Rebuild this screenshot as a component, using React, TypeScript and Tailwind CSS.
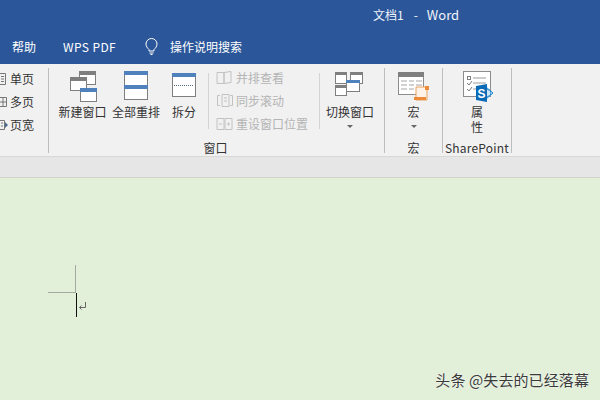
const cjk = "font-['Noto_Sans_CJK_SC','Liberation_Sans',sans-serif]";

function Win({ x, y, w, h, bar, head = 4, border = "#7f7f7f" }: { x: number; y: number; w: number; h: number; bar: string; head?: number; border?: string }) {
  return (
    <g>
      <rect x={x + 0.5} y={y + 0.5} width={w - 1} height={h - 1} fill="#fff" stroke={border} />
      <rect x={x} y={y} width={w} height={head} fill={bar} />
    </g>
  );
}

function NewWindow() {
  return (
    <svg width="32" height="32" viewBox="0 0 32 32">
      <Win x={12} y={0} w={17} h={14} bar="#7f7f7f" />
      <Win x={3} y={6} w={17} h={14} bar="#7f7f7f" />
      <Win x={13} y={17} w={17} h={14} bar="#4f81bd" />
    </svg>
  );
}
function Arrange() {
  return (
    <svg width="26" height="32" viewBox="0 0 26 32">
      <Win x={1} y={0} w={24} h={15} bar="#4f81bd" />
      <Win x={1} y={14} w={24} h={15} bar="#4f81bd" />
    </svg>
  );
}
function Split() {
  return (
    <svg width="26" height="26" viewBox="0 0 26 26">
      <Win x={1} y={1} w={24} h={24} bar="#4f81bd" />
      <line x1="3" x2="23" y1="13.5" y2="13.5" stroke="#5a6d8c" strokeDasharray="1 1" />
    </svg>
  );
}
function SwitchWin() {
  return (
    <svg width="30" height="26" viewBox="0 0 30 26">
      <Win x={1} y={1} w={12} h={12} bar="#7f7f7f" head={3} />
      <Win x={16} y={1} w={13} h={12} bar="#7f7f7f" head={3} />
      <Win x={1} y={14} w={12} h={11} bar="#7f7f7f" head={3} />
      <Win x={12} y={9} w={14} h={12} bar="#4f81bd" head={3} />
    </svg>
  );
}
function Macro() {
  return (
    <svg width="32" height="30" viewBox="0 0 32 30">
      <rect x="0.5" y="0.5" width="25" height="22" fill="#fff" stroke="#8c8c8c" />
      <rect x="0" y="0" width="26" height="5" fill="#7f7f7f" />
      <path d="M3 9h6M11 9h5M18 9h6M3 13h6M11 13h5M18 13h6M3 17h6M11 17h5" stroke="#a6a6a6" />
      <path d="M18 15h11v13H18z" fill="#fdf3e8" stroke="#e8a15e" />
      <path d="M16 28h12v-3H16z" fill="#ed8b3a" />
      <path d="M27 14h4v4h-4z" fill="#ed8b3a" />
    </svg>
  );
}
function SharePointDoc() {
  return (
    <svg width="31" height="32" viewBox="0 0 31 32">
      <rect x="0.5" y="0.5" width="27" height="25" fill="#fff" stroke="#8c8c8c" />
      <rect x="4.5" y="5.5" width="3" height="3" fill="none" stroke="#7f7f7f" />
      <path d="M10 7h13M10 12h13M10 18h4" stroke="#9a9a9a" />
      <path d="M4 12l2 2 3-4M4 18l2 2 3-4" stroke="#7f7f7f" fill="none" />
      <path d="M23 16l7 6-7 6z" fill="#fff" stroke="#1b87d0" />
      <circle cx="24.500" cy="22" r="3.500" fill="#cfe6f7" stroke="#1b87d0" />
      <path d="M13 15l11-2v18l-11-2z" fill="#0a6ab5" />
      <text x="14.500" y="26.500" fontSize="12" fontWeight="700" fill="#fff" fontFamily="Liberation Sans">S</text>
    </svg>
  );
}
function Bulb() {
  return (
    <svg width="13" height="17" viewBox="0 0 13 17" fill="none" stroke="#fff">
      <path d="M4 11.500C2.500 10 1 8.500 1 6a5.500 5.500 0 0 1 11 0c0 2.500-1.500 4-3 5.500V13H4z" />
      <path d="M4.500 15h4M5.500 16.500h2" />
    </svg>
  );
}
function MiniDoc({ kind }: { kind: number }) {
  return (
    <svg width="18" height="16" viewBox="0 0 18 16" fill="none" stroke="#c2c2c2">
      {kind === 0 && <path d="M1 2.500h7v11H1zM8 2.500l7-1v11l-7 1z" />}
      {kind === 1 && <path d="M1.500 2.500H4M1.500 2.500v10H4M14 2.500h2.500v10H14M6 1.500h7v12H6zM8 5h3M8 8h3" />}
      {kind === 2 && <path d="M1 2.500h7v11H1zM9 2.500h7v11H9zM3 8h3M11 8h3M12.500 6.500v3" />}
    </svg>
  );
}
function ViewIcon({ kind }: { kind: number }) {
  return (
    <svg width="8" height="14" viewBox="0 0 8 14" fill="none" stroke="#777">
      {kind === 0 && <path d="M0 1.500h5.500v11H0M1 4.500h3M1 7h3M1 9.500h3" />}
      {kind === 1 && <path d="M0 2.500h6.500v9H0M3 2.500v9M0 7h6.500" />}
      {kind === 2 && <path d="M0 2.500h4.500v9H0M1 5h2M1 8h2" />}
      {kind === 2 && <path d="M5 4l3 3-3 3z" fill="#4a6a8c" stroke="none" />}
    </svg>
  );
}
function Sep({ sub }: { sub?: boolean }) {
  return <div className={sub ? "w-px h-[56px] mt-[9px] bg-[#d4d4d4] shrink-0" : "w-px h-[85px] mt-[4px] bg-[#bdbdbd] shrink-0"} />;
}
function BigButton({ w, icon, label, iconH, gap }: { w: number; icon: any; label: string; iconH: number; gap: number }) {
  return (
    <div className="flex flex-col items-center shrink-0" style={{ width: w }}>
      <div className="flex items-end justify-center" style={{ height: iconH }}>{icon}</div>
      <div className="text-[12px] leading-[16px] whitespace-nowrap text-[#333]" style={{ marginTop: gap }}>{label}</div>
    </div>
  );
}
function Caret() {
  return <div className="w-0 h-0 border-x-[3px] border-x-transparent border-t-[3px] border-t-[#666] mt-[5px]" />;
}
function SmallItem({ kind, label }: { kind: number; label: string }) {
  return (
    <div className="flex items-center gap-[2px] h-[23px] text-[12px] text-[#b4b4b4] whitespace-nowrap">
      <MiniDoc kind={kind} />
      <span>{label}</span>
    </div>
  );
}
function ViewItem({ label, kind }: { label: string; kind: number }) {
  return (
    <div className="flex items-center h-[23px] text-[12px] text-[#333] whitespace-nowrap justify-end gap-[2px]">
      <ViewIcon kind={kind} />
      <span>{label}</span>
    </div>
  );
}

export default function App() {
  return (
    <div className={`w-[600px] h-[400px] overflow-hidden flex flex-col bg-[#e2efd9] ${cjk}`}>
      <header className="h-[64px] bg-[#2b579a] text-white shrink-0 flex flex-col">
        <div className="h-[30px] flex items-center pl-[373px] whitespace-nowrap text-[#f0f4fa]">
          <span className="text-[12px]">文档1</span>
          <span className="text-[12px] ml-[10px]">-</span>
          <span className="text-[13px] ml-[9px]">Word</span>
        </div>
        <nav className="h-[34px] flex items-center text-[12px] whitespace-nowrap pl-[12px] pb-[1px]">
          <span className="w-[51px]">帮助</span>
          <span className="w-[82px] tracking-[0.4px]">WPS PDF</span>
          <Bulb />
          <span className="ml-[12px]">操作说明搜索</span>
        </nav>
      </header>

      <section className="h-[93px] bg-[#f1f1f1] border-b border-[#d8d8d4] flex shrink-0 w-[600px]">
        <div className="w-[48px] pr-[14px] pt-[3px] shrink-0 flex flex-col items-end">
          <ViewItem label="单页" kind={0} />
          <ViewItem label="多页" kind={1} />
          <ViewItem label="页宽" kind={2} />
        </div>
        <Sep />
        <div className="w-[335px] shrink-0 flex flex-col items-center">
          <div className="h-[71px] w-full flex pl-[8px]">
            <BigButton w={51} label="新建窗口" iconH={39} gap={1} icon={<NewWindow />} />
            <BigButton w={56} label="全部重排" iconH={39} gap={1} icon={<Arrange />} />
            <BigButton w={40} label="拆分" iconH={34} gap={6} icon={<Split />} />
            <div className="w-[4px]" />
            <Sep sub />
            <div className="pl-[7px] pt-[2px] w-[110px] shrink-0">
              <SmallItem kind={0} label="并排查看" />
              <SmallItem kind={1} label="同步滚动" />
              <SmallItem kind={2} label="重设窗口位置" />
            </div>
            <Sep sub />
            <div className="flex flex-col items-center w-[60px] shrink-0">
              <BigButton w={60} label="切换窗口" iconH={33} gap={7} icon={<div className="mr-[2px]"><SwitchWin /></div>} />
              <Caret />
            </div>
          </div>
          <div className="text-[12px] leading-[16px] mt-[5px] mr-[2px] text-[#333]">窗口</div>
        </div>
        <Sep />
        <div className="w-[57px] shrink-0 flex flex-col items-center">
          <div className="h-[71px] flex flex-col items-center">
            <BigButton w={57} label="宏" iconH={38} gap={2} icon={<Macro />} />
            <Caret />
          </div>
          <div className="text-[12px] leading-[16px] mt-[5px] text-[#333]">宏</div>
        </div>
        <Sep />
        <div className="w-[68px] shrink-0 flex flex-col items-center">
          <div className="h-[71px] flex flex-col items-center">
            <div className="h-[39px] flex items-end pl-[2px]"><SharePointDoc /></div>
            <div className="text-[12px] leading-[15px] w-[14px] text-center mt-[1px] text-[#333]">属性</div>
          </div>
          <div className="text-[12px] leading-[16px] mt-[5px] text-[#333] tracking-[0.2px]">SharePoint</div>
        </div>
        <Sep />
      </section>

      <div className="h-[21px] bg-[#e6e6e6] border-b border-[#d0d6c8] shrink-0" />

      <main className="flex-1 flex flex-col">
        <div className="w-[28px] h-[28px] ml-[48px] mt-[87px] border-r border-b border-[#a3aa9e] shrink-0" />
        <div className="flex ml-[76px] h-[24px] shrink-0">
          <div className="w-px h-[24px] bg-[#111]" />
          <svg width="9" height="9" viewBox="0 0 9 9" fill="none" stroke="#666" className="mt-[9px] ml-[1px]">
            <path d="M7.500 0v5.500H1.500M3.500 3.500l-2 2 2 2" />
          </svg>
        </div>
        <div className="mt-auto mb-[12px] pr-[11px] flex justify-end text-[15px] tracking-[0.1px] leading-[16px] text-[#3b3b3b] [text-shadow:0_0_2px_#fff] whitespace-nowrap">
          头条 @失去的已经落幕
        </div>
      </main>
    </div>
  );
}
